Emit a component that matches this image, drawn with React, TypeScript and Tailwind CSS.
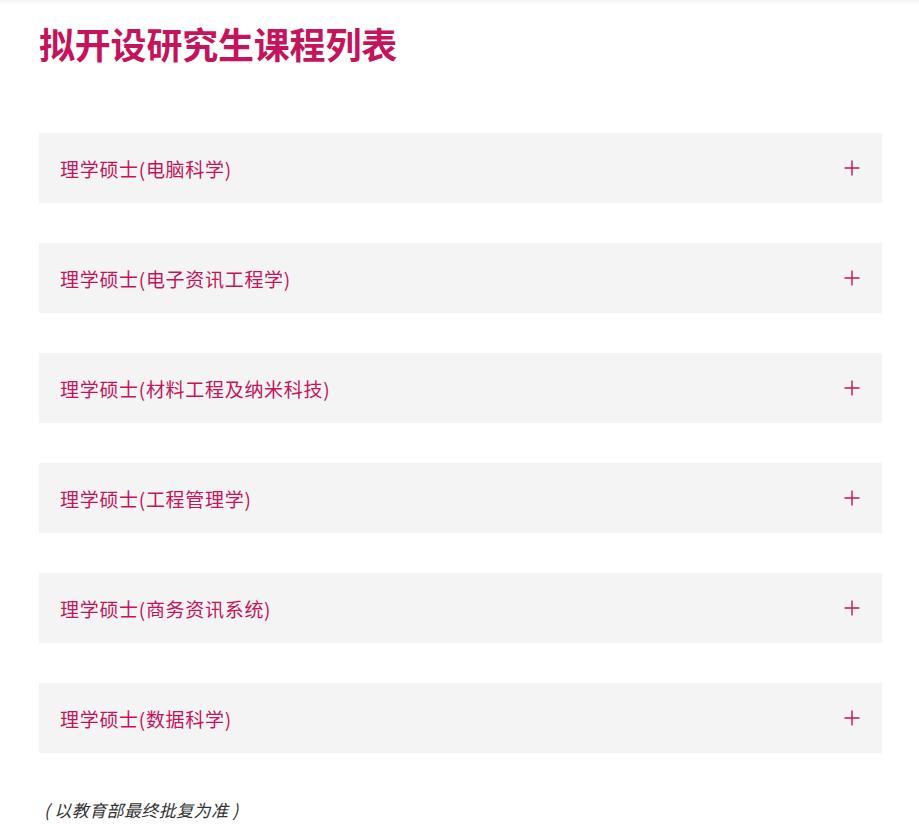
import { Plus } from "lucide-react";

const programmes = [
  "理学硕士(电脑科学)",
  "理学硕士(电子资讯工程学)",
  "理学硕士(材料工程及纳米科技)",
  "理学硕士(工程管理学)",
  "理学硕士(商务资讯系统)",
  "理学硕士(数据科学)",
];

const font = {
  fontFamily: '"Noto Sans CJK SC", "Noto Sans", sans-serif',
};

export default function App() {
  return (
    <div className="min-h-screen w-full bg-white" style={font}>
      {/* faint shadow from header above */}
      <div className="h-1 w-full bg-gradient-to-b from-[#f3f3f3] to-white" />

      <div className="px-[39px] pb-10 pt-[17px]">
        {/* Title */}
        <h1 className="text-[36px] font-bold leading-[44px] tracking-[-0.2px] text-[#c4145b]">
          拟开设研究生课程列表
        </h1>

        {/* Accordion list */}
        <div className="mt-[68px] flex w-[843px] flex-col gap-10">
          {programmes.map((p) => (
            <button
              key={p}
              type="button"
              className="flex h-[70px] w-full items-center justify-between bg-[#f4f4f4] pl-[21px] pr-[18px] text-left"
            >
              <span className="text-[19px] font-normal leading-none tracking-[0.7px] text-[#c4145b]">
                {p}
              </span>
              <Plus size={24} strokeWidth={1.4} className="text-[#c4145b]" />
            </button>
          ))}
        </div>

        {/* Note */}
        <p className="mt-[44px] pl-[5px] text-[17px] font-normal italic tracking-[0.4px] text-[#333]">
          ( 以教育部最终批复为准 )
        </p>
      </div>
    </div>
  );
}
